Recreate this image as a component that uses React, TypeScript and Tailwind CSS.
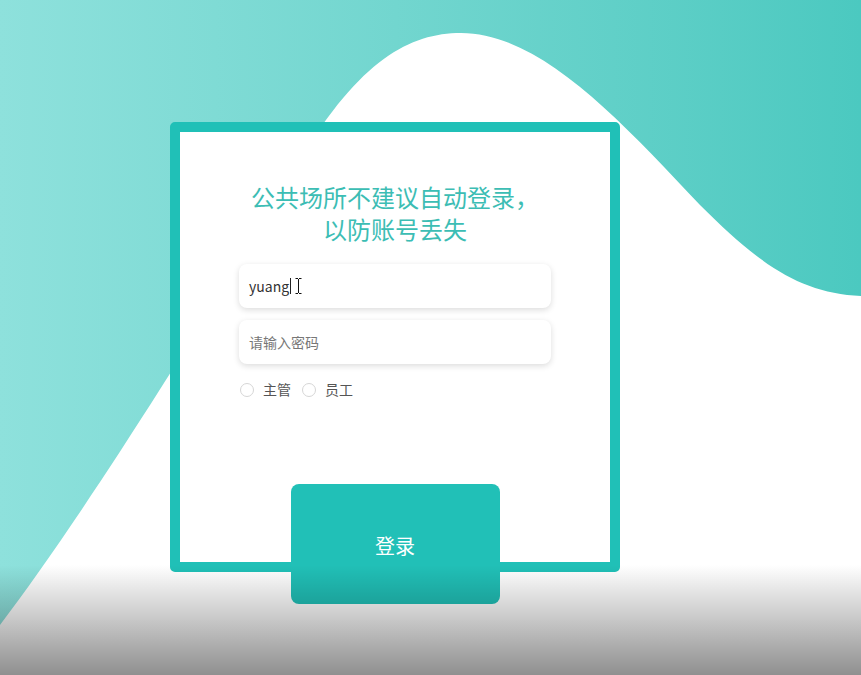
export default function App() {
  return (
    <div className="relative h-[675px] w-[861px] overflow-hidden bg-gradient-to-r from-[#8ee1dc] to-[#4bc9c0] font-['Noto_Sans_CJK_SC','Noto_Sans',sans-serif]">
      {/* wave */}
      <svg className="absolute inset-0" width="861" height="675" viewBox="0 0 861 675">
        <path
          d="M0 625 C80 520 200 330 300 160 C360 60 410 33 461 33 C540 33 620 120 700 205 C760 265 800 293 861 296 L861 675 L0 675 Z"
          fill="#ffffff"
        />
      </svg>

      <div className="relative pl-[170px] pt-[122px]">
        <div className="flex h-[450px] w-[450px] flex-col items-center rounded-[5px] border-[10px] border-[#20c0b7] bg-white pt-[49px]">
          <h1 className="text-center text-[24px] leading-[32px] font-normal text-[#3cbdb4]">
            公共场所不建议自动登录，
            <br />
            以防账号丢失
          </h1>

          <div className="mt-[19px] flex w-[312px] flex-col gap-3">
            <div className="flex h-11 items-center rounded-lg bg-white px-[10px] text-[14px] text-[#333] shadow-[0_2px_6px_rgba(0,0,0,0.14)]">
              <span>yuang</span>
              <span className="ml-[1px] h-[16px] w-px bg-[#222]" />
              <svg className="ml-[4px]" width="7" height="16" viewBox="0 0 7 16">
                <path d="M0.5 0.5h2.5M4 0.5h2.5M3.5 1v14M0.5 15.5h2.5M4 15.5h2.5" stroke="#111" strokeWidth="1" fill="none" />
              </svg>
            </div>
            <div className="flex h-11 items-center rounded-lg bg-white px-[10px] text-[14px] text-[#777] shadow-[0_2px_6px_rgba(0,0,0,0.14)]">
              请输入密码
            </div>
          </div>

          <div className="mt-[15px] flex w-[312px] items-center text-[14px] text-[#555]">
            <span className="ml-[1px] h-[14px] w-[14px] rounded-full border border-[#d6d6d6] bg-white" />
            <span className="ml-[9px]">主管</span>
            <span className="ml-[11px] h-[14px] w-[14px] rounded-full border border-[#d6d6d6] bg-white" />
            <span className="ml-[9px]">员工</span>
          </div>

          <button className="mt-auto mb-[-42px] flex h-[120px] w-[209px] shrink-0 items-center justify-center rounded-lg bg-[#21c0b7] pt-[4px] text-[20px] text-white">
            登录
          </button>
        </div>
      </div>

      {/* bottom fade */}
      <div className="pointer-events-none absolute inset-x-0 bottom-0 h-[110px] bg-gradient-to-b from-[rgba(0,0,0,0)] to-[rgba(0,0,0,0.44)]" />
    </div>
  );
}
